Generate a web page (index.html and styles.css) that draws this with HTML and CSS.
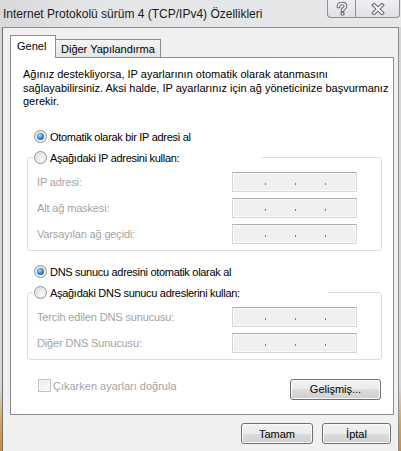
FILE: index.html
```html
<!DOCTYPE html>
<html lang="tr">
<head>
    <meta charset="UTF-8">
    <title>Internet Protokolü sürüm 4 (TCP/IPv4) Özellikleri</title>
    <link rel="stylesheet" href="styles.css">
</head>
<body>
    <div class="window">
        <div class="titlebar">
            <span class="title">Internet Protokolü sürüm 4 (TCP/IPv4) Özellikleri</span>
            <div class="caption-buttons">
                <span class="cap-btn help">
                    <svg width="12" height="14" viewBox="0 0 12 14">
                        <path d="M2.5 4.5 C2.5 2.2 4 1.5 6 1.5 C8.2 1.5 9.5 2.6 9.5 4.3 C9.5 6.2 6.5 6.4 6.5 8.5" fill="none" stroke="#6b6d70" stroke-width="3.6" stroke-linecap="square"/>
                        <rect x="4.6" y="10" width="3.8" height="3.4" fill="#6b6d70"/>
                        <path d="M2.5 4.5 C2.5 2.2 4 1.5 6 1.5 C8.2 1.5 9.5 2.6 9.5 4.3 C9.5 6.2 6.5 6.4 6.5 8.5" fill="none" stroke="#fff" stroke-width="1.5" stroke-linecap="square"/>
                        <rect x="5.7" y="11" width="1.6" height="1.4" fill="#fff"/>
                    </svg>
                </span>
                <span class="cap-btn close">
                    <svg width="14" height="12" viewBox="0 0 14 12">
                        <path d="M3 2 L11 10 M11 2 L3 10" stroke="#6b6d70" stroke-width="4" stroke-linecap="square"/>
                        <path d="M3 2 L11 10 M11 2 L3 10" stroke="#fff" stroke-width="1.8" stroke-linecap="square"/>
                    </svg>
                </span>
            </div>
        </div>

        <div class="client">
            <div class="tabs">
                <span class="tab active">Genel</span>
                <span class="tab">Diğer Yapılandırma</span>
            </div>

            <div class="panel">
                <p class="intro">Ağınız destekliyorsa, IP ayarlarının otomatik olarak atanmasını<br>sağlayabilirsiniz. Aksi halde, IP ayarlarınız için ağ yöneticinize başvurmanız<br>gerekir.</p>

                <div class="option first"><span class="radio checked"></span>Otomatik olarak bir IP adresi al</div>
                <fieldset class="group">
                    <legend class="option ip-legend"><span class="radio"></span>Aşağıdaki IP adresini kullan:</legend>
                    <div class="field"><span>IP adresi:</span><span class="ipbox"><i></i><i></i><i></i></span></div>
                    <div class="field"><span>Alt ağ maskesi:</span><span class="ipbox"><i></i><i></i><i></i></span></div>
                    <div class="field"><span>Varsayılan ağ geçidi:</span><span class="ipbox"><i></i><i></i><i></i></span></div>
                </fieldset>

                <div class="option second"><span class="radio checked"></span>DNS sunucu adresini otomatik olarak al</div>
                <fieldset class="group">
                    <legend class="option dns-legend"><span class="radio"></span>Aşağıdaki DNS sunucu adreslerini kullan:</legend>
                    <div class="field"><span>Tercih edilen DNS sunucusu:</span><span class="ipbox"><i></i><i></i><i></i></span></div>
                    <div class="field"><span>Diğer DNS Sunucusu:</span><span class="ipbox"><i></i><i></i><i></i></span></div>
                </fieldset>

                <div class="panel-foot">
                    <div class="check"><span class="checkbox"></span>Çıkarken ayarları doğrula</div>
                    <button class="btn advanced">Gelişmiş...</button>
                </div>
            </div>

            <div class="dialog-buttons">
                <button class="btn ok">Tamam</button>
                <button class="btn cancel">İptal</button>
            </div>
        </div>
    </div>
</body>
</html>
```

FILE: styles.css
```css
* {
    margin: 0;
    padding: 0;
    box-sizing: border-box;
}

body {
    width: 401px;
    height: 451px;
    overflow: hidden;
    font-family: "Liberation Sans", Arial, sans-serif;
    font-size: 11px;
    color: #000;
    background: linear-gradient(to bottom, #d4d5d7 0%, #d4d5d7 86%, #d8a860 93%, #c98a3a 100%);
}

.window {
    display: flex;
    flex-direction: column;
    height: 451px;
}

/* title bar */
.titlebar {
    height: 27px;
    display: flex;
    justify-content: space-between;
    align-items: flex-start;
    padding-left: 3px;
    background: linear-gradient(to right, #d9d9da 0%, #e4e5e7 25%, #e6e7e9 100%);
}

.title {
    font-size: 12px;
    line-height: 28px;
    color: #1a1a1a;
}

.caption-buttons {
    display: flex;
    margin-right: 1px;
}

.cap-btn {
    height: 18px;
    display: flex;
    align-items: center;
    justify-content: center;
    border: 1px solid #8d8f92;
    border-top: none;
    background: linear-gradient(#eff0f2, #dfe1e4);
}

.help {
    width: 28px;
    border-right: none;
    border-bottom-left-radius: 4px;
}

.close {
    width: 45px;
    border-bottom-right-radius: 4px;
}

/* client area */
.client {
    flex: 1;
    margin-left: 2px;
    margin-right: 2px;
    border-left: 1px solid #6f7072;
    border-top: 1px solid #8c8d8f;
    border-right: 1px solid #8c8d8f;
    background: #f0f0f0;
    padding: 7px 7px 0 7px;
}

.tabs {
    display: flex;
    align-items: flex-end;
    height: 22px;
}

.tab {
    height: 18px;
    padding: 0 5px;
    line-height: 18px;
    border: 1px solid #898c95;
    border-bottom: none;
    border-left: none;
    background: linear-gradient(#f3f3f3, #e6e6e6);
}

.tab.active {
    position: relative;
    z-index: 1;
    height: 23px;
    margin-bottom: -1px;
    width: 46px;
    padding: 0 6px;
    line-height: 21px;
    border-left: 1px solid #898c95;
    background: #fff;
}

.panel {
    width: 384px;
    height: 358px;
    border: 1px solid #898c95;
    background: #fff;
    padding: 10px 11px 0 12px;
}

.intro {
    line-height: 13.5px;
    white-space: nowrap;
}

.option {
    display: flex;
    align-items: center;
    gap: 3px;
    height: 16px;
    margin-left: 11px;
    letter-spacing: -0.3px;
    white-space: nowrap;
}

.option.first {
    margin-top: 20px;
}

.option.second {
    margin-top: 13px;
}

.radio {
    flex: none;
    width: 13px;
    height: 13px;
    border-radius: 50%;
    border: 1px solid #8e8f8f;
    background: radial-gradient(circle at 65% 65%, #fdfdfd 0%, #e9e9e9 45%, #c9c9c9 100%);
    box-shadow: inset 0 0 0 1px #f2f2f2;
    display: flex;
    align-items: center;
    justify-content: center;
}

.radio.checked::after {
    content: "";
    width: 7px;
    height: 7px;
    border-radius: 50%;
    background: radial-gradient(circle at 40% 35%, #a6e0ff 0%, #3b8fd5 45%, #0f3e73 100%);
}

.group {
    margin-top: 5px;
    margin-left: 4px;
    border: 1px solid #d5dfe5;
    border-radius: 3px;
    padding: 0 24px 6px 9px;
}

.group legend.option {
    margin-left: -4px;
    padding: 0 0 0 1px;
}

.ip-legend {
    width: 228px;
}

.dns-legend {
    width: 295px;
}

.field {
    display: flex;
    justify-content: space-between;
    align-items: center;
    height: 20px;
    margin-top: 6px;
    color: #a3a3a3;
    letter-spacing: -0.15px;
}

.ipbox {
    width: 125px;
    height: 20px;
    display: flex;
    gap: 29px;
    padding: 10px 0 0 32px;
    border: 1px solid #d3d6da;
    border-top-color: #abadb2;
    background: #f0f0f0;
    box-shadow: inset 0 0 0 1px #fafafa;
}

.ipbox i {
    width: 1px;
    height: 2px;
    background: #6f7f90;
}

.panel-foot {
    display: flex;
    justify-content: space-between;
    align-items: flex-start;
    margin-top: 19px;
}

.check {
    display: flex;
    align-items: center;
    gap: 2px;
    height: 16px;
    margin-top: -1px;
    margin-left: 15px;
    color: #a3a3a3;
}

.checkbox {
    width: 13px;
    height: 13px;
    border: 1px solid #c3c3c3;
    background: linear-gradient(135deg, #ececec, #f9f9f9);
    box-shadow: inset 0 0 0 1px #f5f5f5;
}

.btn {
    height: 21px;
    font-family: "Liberation Sans", Arial, sans-serif;
    font-size: 11px;
    color: #000;
    border: 1px solid #707070;
    border-radius: 3px;
    background: linear-gradient(#f2f2f2 0%, #ebebeb 50%, #dddddd 50%, #cfcfcf 100%);
    box-shadow: inset 0 0 0 1px #fbfbfb;
}

.advanced {
    width: 91px;
    margin-right: 1px;
}

.dialog-buttons {
    display: flex;
    justify-content: flex-end;
    gap: 9px;
    margin-top: 8px;
    padding-right: 0;
}

.ok {
    width: 72px;
}

.cancel {
    width: 69px;
}
```
